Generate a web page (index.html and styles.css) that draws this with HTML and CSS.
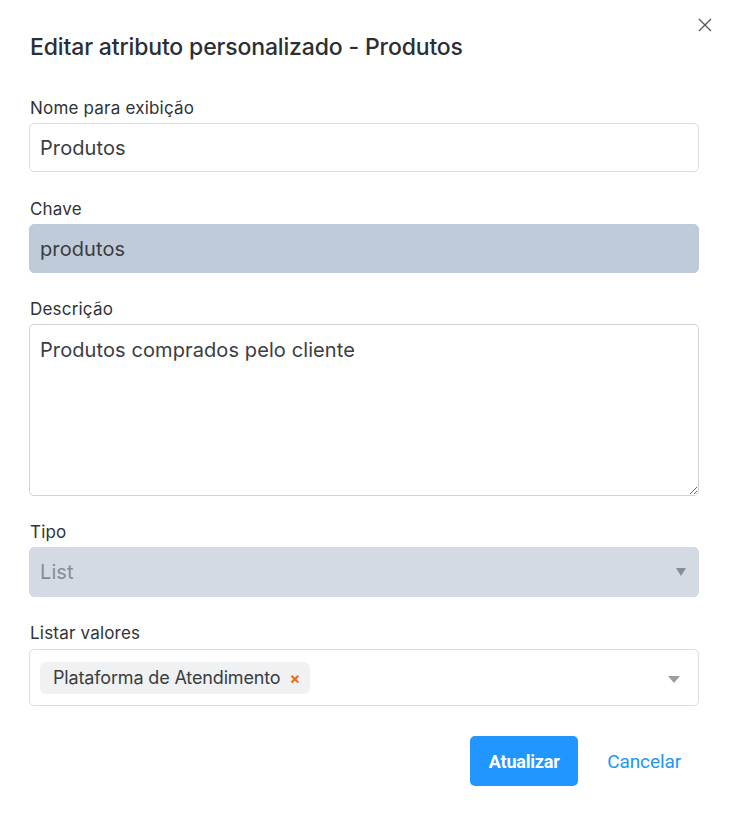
FILE: index.html
```html
<!DOCTYPE html>
<html lang="pt">
<head>
<meta charset="utf-8">
<title>Editar atributo personalizado</title>
<link rel="stylesheet" href="styles.css">
</head>
<body>
<div class="modal">
  <button class="close" aria-label="Fechar">
    <svg width="14" height="14" viewBox="0 0 14 14"><path d="M1 1L13 13M13 1L1 13" stroke="#555" stroke-width="1.3" fill="none"/></svg>
  </button>
  <h1 class="title">Editar atributo personalizado - Produtos</h1>
  <form class="form">
    <div class="field">
      <label class="label">Nome para exibição</label>
      <div class="input">Produtos</div>
    </div>
    <div class="field field-key">
      <label class="label">Chave</label>
      <div class="input input-disabled">produtos</div>
    </div>
    <div class="field">
      <label class="label">Descrição</label>
      <textarea class="textarea" readonly>Produtos comprados pelo cliente</textarea>
    </div>
    <div class="field">
      <label class="label">Tipo</label>
      <div class="input select-disabled">
        <span>List</span>
        <span class="tri tri-dark"></span>
      </div>
    </div>
    <div class="field">
      <label class="label">Listar valores</label>
      <div class="multi">
        <span class="tag">Plataforma de Atendimento <span class="tag-x">×</span></span>
        <span class="tri"></span>
      </div>
    </div>
    <div class="actions">
      <button type="button" class="btn-primary">Atualizar</button>
      <button type="button" class="btn-link">Cancelar</button>
    </div>
  </form>
</div>
</body>
</html>
```

FILE: styles.css
```css
* { box-sizing: border-box; }
html, body { margin: 0; padding: 0; background: #fff; }
body {
  font-family: Inter, "Noto Sans", sans-serif;
  color: #2f3338;
}
.modal {
  position: relative;
  width: 731px;
  padding: 32px 32px 0 29px;
}
.close {
  position: absolute;
  top: 18px;
  right: 19px;
  border: 0;
  background: none;
  padding: 0;
  width: 14px;
  height: 14px;
  display: flex;
}
.title {
  margin: 0 0 34px 1px;
  font-size: 23px;
  font-weight: 500;
  line-height: 31px;
  letter-spacing: -0.15px;
  color: #2b2f33;
}
.form { display: flex; flex-direction: column; gap: 25px; }
.field { display: flex; flex-direction: column; }
.field-key { margin-top: 1px; }
.label {
  font-size: 17px;
  line-height: 22px;
  margin: 0 0 4px 1px;
  letter-spacing: 0.2px;
  color: #2f3338;
}
.input {
  height: 49px;
  border: 1px solid #dadde2;
  border-radius: 5px;
  padding: 0 10px;
  display: flex;
  align-items: center;
  font-size: 20px;
  letter-spacing: 0.1px;
  color: #3a3d42;
}
.input-disabled { background: #c0cbd9; border-color: #c0cbd9; }
.select-disabled {
  height: 50px;
  background: #d3dae3;
  border-color: #d3dae3;
  color: #878c93;
  justify-content: space-between;
  padding-right: 12px;
}
.textarea {
  display: block;
  width: 100%;
  height: 172px;
  border: 1px solid #cfd4db;
  border-radius: 5px;
  padding: 13px 10px;
  font-family: Inter, "Noto Sans", sans-serif;
  font-size: 20px;
  letter-spacing: 0.1px;
  color: #3a3d42;
  resize: vertical;
  outline: none;
}
.tri {
  width: 0;
  height: 0;
  border-left: 6px solid transparent;
  border-right: 6px solid transparent;
  border-top: 7px solid #9a9da2;
}
.tri-dark { border-left-width: 5px; border-right-width: 5px; border-top: 8px solid #8a8e94; }
.multi {
  height: 57px;
  margin-top: 1px;
  border: 1px solid #dadde2;
  border-radius: 5px;
  padding: 0 18px 0 10px;
  display: flex;
  align-items: center;
  justify-content: space-between;
}
.multi .tri { margin-top: 4px; }
.tag {
  background: #f0f1f3;
  border-radius: 6px;
  height: 32px;
  padding: 0 10px 0 13px;
  display: flex;
  align-items: center;
  gap: 9px;
  font-size: 18px;
  letter-spacing: -0.15px;
  color: #3a3d42;
}
.tag-x { color: #f06a1a; font-weight: 700; font-size: 16px; }
.actions {
  display: flex;
  justify-content: flex-end;
  align-items: center;
  gap: 6px;
  margin-top: 5px;
  padding-right: 1px;
}
.btn-primary {
  width: 108px;
  height: 50px;
  border: 0;
  border-radius: 5px;
  background: #2196fe;
  color: #fff;
  font-family: Roboto, "Liberation Sans", sans-serif;
  font-weight: 700;
  font-size: 18px;
  letter-spacing: -0.2px;
}
.btn-link {
  border: 0;
  background: none;
  color: #2196f3;
  font-family: Roboto, "Liberation Sans", sans-serif;
  font-size: 19px;
  letter-spacing: -0.1px;
  padding: 0 17px 0 23px;
  height: 50px;
}
```
